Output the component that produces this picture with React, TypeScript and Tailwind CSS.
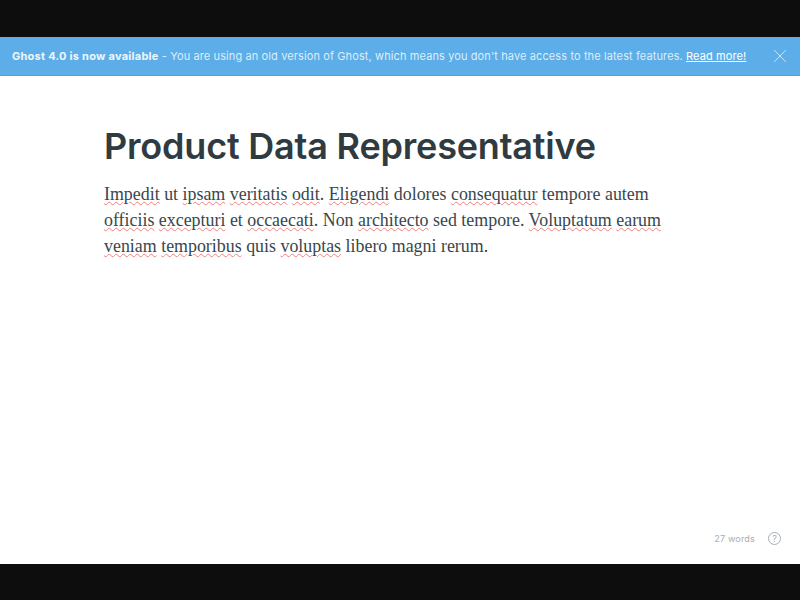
import { X } from 'lucide-react';

const LINES = [
  [['Impedit', 1], [' ut ', 0], ['ipsam', 1], [' ', 0], ['veritatis', 1], [' ', 0], ['odit', 1], ['. ', 0], ['Eligendi', 1], [' dolores ', 0], ['consequatur', 1], [' tempore autem', 0]],
  [['officiis', 1], [' ', 0], ['excepturi', 1], [' et ', 0], ['occaecati', 1], ['. Non ', 0], ['architecto', 1], [' sed tempore. ', 0], ['Voluptatum', 1], [' ', 0], ['earum', 1]],
  [['veniam', 1], [' ', 0], ['temporibus', 1], [' quis ', 0], ['voluptas', 1], [' libero magni rerum.', 0]],
] as [string, number][][];

export default function App() {
  return (
    <div className="flex h-[600px] w-[800px] flex-col overflow-hidden bg-[#0d0d0d] font-['Inter',sans-serif]">
      <div className="h-[37px] shrink-0" />

      {/* Update banner */}
      <div className="flex h-[39px] shrink-0 items-center justify-between border-b border-[#4f9fe0] bg-[#5daee8] pl-3 pr-[9px] text-[11px] tracking-[0.11px] text-[#dcedfa]">
        <p className="whitespace-nowrap">
          <span className="font-bold tracking-[0.25px] text-[#eef6fc]">Ghost 4.0 is now available</span>
          {' - You are using an old version of Ghost, which means you don\'t have access to the latest features. '}
          <a href="#" className="text-white underline">Read more!</a>
        </p>
        <X className="size-[22px] text-[#d6eafa]" strokeWidth={1} />
      </div>

      {/* Editor */}
      <main className="flex flex-1 flex-col bg-white pl-[104px] pt-[47px] text-[#2f3b40]">
        <h1 className="text-[36px] leading-[46px] font-semibold tracking-[-0.2px]">Product Data Representative</h1>
        <div className="mt-[12px] font-['Liberation_Serif',serif] text-[17.9px] leading-[26px] text-[#3a464b]">
          {LINES.map((line, i) => (
            <p key={i} className="whitespace-pre">
              {line.map(([text, misspelled], j) => (
                <span
                  key={j}
                  className={misspelled ? 'underline decoration-[#ef7f7f] decoration-wavy decoration-1 underline-offset-1' : ''}
                >
                  {text}
                </span>
              ))}
            </p>
          ))}
        </div>

        {/* Word count */}
        <div className="mt-auto flex items-center justify-end gap-[13px] pb-[19px] pr-[19px]">
          <span className="text-[9px] tracking-[0.2px] text-[#a5adb3]">27 words</span>
          <span className="flex size-[13px] items-center justify-center rounded-full border border-[#a5adb3] text-[9px] text-[#a5adb3]">?</span>
        </div>
      </main>

      <div className="h-9 shrink-0" />
    </div>
  );
}
